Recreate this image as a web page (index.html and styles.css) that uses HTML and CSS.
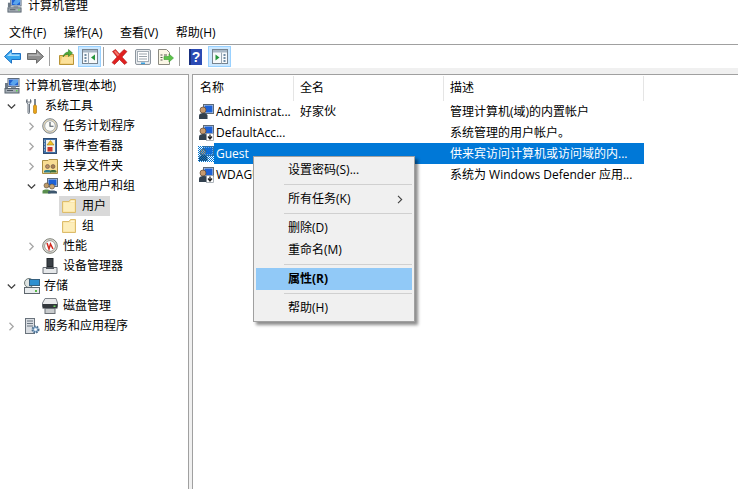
FILE: index.html
```html
<!DOCTYPE html>
<html lang="zh-CN">
<head>
<meta charset="utf-8">
<title>计算机管理</title>
<link rel="stylesheet" href="styles.css">
</head>
<body>
<svg class="defs" width="0" height="0">
  <defs>
    <symbol id="computer" viewBox="0 0 16 16">
      <rect x="4" y="0.5" width="11" height="8" fill="#dfe6ee" stroke="#5c6b7c"/>
      <rect x="5" y="1.5" width="9" height="6" fill="#1f5fd0"/>
      <path d="M6 6 9 2h5v2l-4 3.500z" fill="#5aa5ee"/>
      <rect x="7" y="8.500" width="5" height="1.500" fill="#8a96a2"/>
      <rect x="1" y="10.500" width="14" height="4.500" fill="#a5adb5" stroke="#59646f"/>
      <rect x="3" y="12" width="6" height="1" fill="#505a64"/>
      <rect x="12" y="12" width="1.500" height="1.500" fill="#5fd04f"/>
      <rect x="1" y="5" width="3" height="5" fill="#6e7a86"/>
    </symbol>
    <symbol id="folder" viewBox="0 0 16 16">
      <path d="M1.500 3.500V14.500H14.500V1.500H9.500L8 3.500z" fill="#f9e09a" stroke="#dcbc6c"/>
      <path d="M2.500 4.500H13.500V13.500H2.500z" fill="#fdeebb"/>
      <path d="M10 2.500h3.500v1.500H9z" fill="#fff6d8"/>
    </symbol>
    <symbol id="users" viewBox="0 0 16 16">
      <rect x="5.500" y="0.500" width="10" height="9" fill="#cfd9e4" stroke="#5d6b7a"/>
      <rect x="6.500" y="1.500" width="8" height="7" fill="#1e62d6"/>
      <circle cx="5" cy="6" r="3" fill="#c89a6e" stroke="#5b4630" stroke-width=".7"/>
      <path d="M1 15v-3.500C1 10 3 9 5 9S9.500 10 9.500 11.500V15z" fill="#33414f"/>
    </symbol>
    <symbol id="userdown" viewBox="0 0 16 16">
      <rect x="5.500" y="0.500" width="10" height="9" fill="#cfd9e4" stroke="#5d6b7a"/>
      <rect x="6.500" y="1.500" width="8" height="7" fill="#1e62d6"/>
      <circle cx="5" cy="6" r="3" fill="#c89a6e" stroke="#5b4630" stroke-width=".7"/>
      <path d="M1 15v-3.500C1 10 3 9 5 9S9.500 10 9.500 11.500V15z" fill="#33414f"/>
      <rect x="8.500" y="8.500" width="7" height="7" fill="#fff" stroke="#8b949d" stroke-width=".7"/>
      <path d="M12 9.500v3.500M10 11.500l2 2.500 2-2.500" fill="none" stroke="#222" stroke-width="1.300"/>
    </symbol>
    <pattern id="dither" width="2" height="2" patternUnits="userSpaceOnUse">
      <rect width="1" height="1" fill="#0078d7"/>
      <rect x="1" y="1" width="1" height="1" fill="#0078d7"/>
    </pattern>
  </defs>
</svg>

<div class="window">
  <header class="titlebar">
    <svg class="title-icon" width="15" height="15"><use href="#computer"/></svg>
    <span>计算机管理</span>
  </header>

  <nav class="menubar">
    <span class="menu">文件(F)</span>
    <span class="menu">操作(A)</span>
    <span class="menu">查看(V)</span>
    <span class="menu">帮助(H)</span>
  </nav>

  <div class="toolbar">
    <span class="tool tool-nav">
      <svg width="17" height="15" viewBox="0 0 17 15"><path d="M.5 7.500 7.500.8V4.500H16.500V10.500H7.500V14.200z" fill="#38a7ee" stroke="#1f72c4"/><path d="M3 7 7.500 3V5.500H15.500V7z" fill="#a6dcfb"/></svg>
    </span>
    <span class="tool tool-nav">
      <svg width="17" height="15" viewBox="0 0 17 15"><path d="M16.500 7.500 9.500.8V4.500H.5V10.500H9.500V14.200z" fill="#8f8f8f" stroke="#6b6b6b"/><path d="M1.500 5.500H10V3L14 7H1.500z" fill="#b4b4b4"/></svg>
    </span>
    <i class="tool-sep"></i>
    <span class="tool tool-up">
      <svg width="15" height="16" viewBox="0 0 15 16"><path d="M.5 6.500H5L6 5.500H14.500V15.500H.5z" fill="#efc76c" stroke="#b89436"/><path d="M1.500 14.500 3 8H14V14.500z" fill="#fbe19a"/><path d="M4 8C5 4.500 7 3 9.500 3V.5L13.500 4 9.500 7.500V5C7.500 5 5.500 6 4 8z" fill="#4fae3c" stroke="#2f7d28" stroke-width=".6"/></svg>
    </span>
    <span class="tool tool-on tool-on-tree">
      <svg width="16" height="15" viewBox="0 0 16 15"><rect x=".5" y=".5" width="15" height="14" fill="#f7f9fb" stroke="#77838f"/><rect x="1" y="1" width="14" height="2.500" fill="#a9b8c6"/><path d="M6.500 3.500V14.500" stroke="#9aa7b3"/><path d="M2.500 6h2M2.500 9h2M2.500 12h2" stroke="#456a8a" stroke-width="1.300"/><path d="M13 5.500v6L9 8.500z" fill="#25963c"/></svg>
    </span>
    <i class="tool-sep"></i>
    <span class="tool tool-del">
      <svg width="17" height="16" viewBox="0 0 17 16"><path d="M1.500 2.500 4.500 .5 8.500 5 13 .5 16 2.500 11 8 16 13.500 13.500 15.500 8.500 10.500 3.500 15.500 1 13.500 6 8z" fill="#e01f1f" stroke="#a82020" stroke-width=".6"/><path d="M3 2.500 4.500 1.500 8.500 6 6.500 7z" fill="#f47a6e"/></svg>
    </span>
    <span class="tool tool-prop">
      <svg width="16" height="16" viewBox="0 0 16 16"><rect x=".5" y=".5" width="15" height="15" rx="1.500" fill="#e6e9ec" stroke="#8c959e"/><rect x="2.500" y="2.500" width="11" height="10" fill="#fff" stroke="#a4adb5"/><path d="M4 5h8M4 7.500h8M4 10h8" stroke="#9aa3ab"/><rect x="6" y="13.500" width="4" height="1.500" fill="#3aa0e0"/></svg>
    </span>
    <span class="tool tool-export">
      <svg width="17" height="16" viewBox="0 0 17 16"><path d="M1.500 .5H9.500L12.500 3.500V15.500H1.500z" fill="#fbf7e6" stroke="#8b8a80"/><path d="M3.500 6h2M3.500 8.500h2M3.500 11h2M7 6h3" stroke="#56544c"/><path d="M7 7.500h5V5l4.500 4-4.500 4v-2.500H7z" fill="#5cc24a" stroke="#3a9a30" stroke-width=".6"/></svg>
    </span>
    <i class="tool-sep"></i>
    <span class="tool tool-help">
      <svg width="13" height="16" viewBox="0 0 13 16"><rect width="13" height="16" fill="#2b4ab4"/><rect x="0" width="2" height="16" fill="#19307f"/><text class="help-q" x="7" y="13">?</text></svg>
    </span>
    <span class="tool tool-on tool-on-action">
      <svg width="16" height="15" viewBox="0 0 16 15"><rect x=".5" y=".5" width="15" height="14" fill="#f7f9fb" stroke="#77838f"/><rect x="1" y="1" width="14" height="2.500" fill="#a9b8c6"/><path d="M9.500 3.500V14.500" stroke="#9aa7b3"/><path d="M11.500 6h2M11.500 9h2M11.500 12h2" stroke="#456a8a" stroke-width="1.300"/><path d="M3.500 5.500v6L7.500 8.500z" fill="#25963c"/></svg>
    </span>
  </div>

  <div class="panes">
    <aside class="tree">
      <div class="node lvl0">
        <svg class="ico" width="16" height="16"><use href="#computer"/></svg>
        <span class="label">计算机管理(本地)</span>
      </div>
      <div class="node lvl1">
        <svg class="chev open" width="9" height="9" viewBox="0 0 9 9"><path d="M.8 2.500 4.500 6.200 8.200 2.500"/></svg>
        <svg class="ico" width="14" height="16" viewBox="0 0 14 16"><path d="M2 1.500C1 3 1.500 5.500 3 6v8.500c0 1.500 1.500 1.500 1.500 0V6C6 5.500 6.500 3 5.500 1.500V4H3.500L2 4z" fill="#e4e8ec" stroke="#5b6570" stroke-width=".9"/><path d="M10 1v6" stroke="#7d8791" stroke-width="2"/><rect x="8.500" y="7" width="3" height="8.500" rx="1.200" fill="#eaa517" stroke="#a86f0c" stroke-width=".6"/></svg>
        <span class="label">系统工具</span>
      </div>
      <div class="node lvl2">
        <svg class="chev" width="9" height="9" viewBox="0 0 9 9"><path d="M2.500 .8 6.200 4.500 2.500 8.200"/></svg>
        <svg class="ico" width="16" height="16" viewBox="0 0 16 16"><circle cx="8" cy="8" r="7.300" fill="#e6d9b8" stroke="#7e8790"/><circle cx="8" cy="8" r="5.300" fill="#fbfbf7" stroke="#a8aeb4"/><path d="M8 4v4.200h3.500" fill="none" stroke="#4a5560" stroke-width="1.100"/></svg>
        <span class="label">任务计划程序</span>
      </div>
      <div class="node lvl2">
        <svg class="chev" width="9" height="9" viewBox="0 0 9 9"><path d="M2.500 .8 6.200 4.500 2.500 8.200"/></svg>
        <svg class="ico" width="16" height="16" viewBox="0 0 16 16"><rect x="1.500" y=".5" width="13" height="15" fill="#3e6fa8" stroke="#304d73"/><rect x="4" y="2" width="9" height="12" fill="#f5f2e6"/><path d="M8.500 2.500 12 7H5z" fill="#f0c020" stroke="#8c6b10" stroke-width=".5"/><rect x="5.500" y="9" width="5" height="4.500" fill="#c8322c"/><path d="M2 3h1M2 6h1M2 9h1M2 12h1" stroke="#ddd"/></svg>
        <span class="label">事件查看器</span>
      </div>
      <div class="node lvl2">
        <svg class="chev" width="9" height="9" viewBox="0 0 9 9"><path d="M2.500 .8 6.200 4.500 2.500 8.200"/></svg>
        <svg class="ico" width="16" height="16" viewBox="0 0 16 16"><path d="M.5 2.500H6L7 1.500H15.500V15.500H.5z" fill="#f8dc93" stroke="#a98e44"/><circle cx="5.500" cy="8.500" r="2" fill="#b98e62" stroke="#544" stroke-width=".5"/><path d="M2 14.500v-1.500C2 11.500 9 11.500 9 13v1.500z" fill="#2f7f8f"/><circle cx="11" cy="8.500" r="2" fill="#a87e50" stroke="#544" stroke-width=".5"/><path d="M8 14.500v-1.500C8 11.500 14.500 11.500 14.500 13v1.500z" fill="#3c6e3c"/></svg>
        <span class="label">共享文件夹</span>
      </div>
      <div class="node lvl2">
        <svg class="chev open" width="9" height="9" viewBox="0 0 9 9"><path d="M.8 2.500 4.500 6.200 8.200 2.500"/></svg>
        <svg class="ico" width="16" height="16" viewBox="0 0 16 16"><rect x="5.500" y=".5" width="10" height="8" fill="#cfd9e4" stroke="#5d6b7a"/><rect x="6.500" y="1.500" width="8" height="6" fill="#1e62d6"/><circle cx="4.500" cy="7.500" r="2.500" fill="#bd9a68" stroke="#54483a" stroke-width=".6"/><path d="M.5 15.500V13C.5 11 8.500 11 8.500 13v2.500z" fill="#5a8f4e"/><circle cx="10" cy="8.500" r="2.500" fill="#caa876" stroke="#54483a" stroke-width=".6"/><path d="M6 15.500V14C6 12 15 12 15 14v1.500z" fill="#3c566e"/></svg>
        <span class="label">本地用户和组</span>
      </div>
      <div class="node lvl3 picked">
        <svg class="ico" width="16" height="16"><use href="#folder"/></svg>
        <span class="label">用户</span>
      </div>
      <div class="node lvl3">
        <svg class="ico" width="16" height="16"><use href="#folder"/></svg>
        <span class="label">组</span>
      </div>
      <div class="node lvl2">
        <svg class="chev" width="9" height="9" viewBox="0 0 9 9"><path d="M2.500 .8 6.200 4.500 2.500 8.200"/></svg>
        <svg class="ico" width="16" height="16" viewBox="0 0 16 16"><circle cx="8" cy="8" r="7.300" fill="#e2e0d8" stroke="#7e8078"/><circle cx="8" cy="8" r="5.400" fill="#fff" stroke="#9a9a94"/><path d="M5 5 7 11 8.500 6 11 11" fill="none" stroke="#d22a20" stroke-width="1.500"/></svg>
        <span class="label">性能</span>
      </div>
      <div class="node lvl2">
        <svg class="ico" width="16" height="16" viewBox="0 0 16 16"><rect x="5" y=".5" width="6" height="8" fill="#3a4046" stroke="#23282c"/><path d="M1 9.500H15V15.500H1z" fill="#e6e8ea" stroke="#6b7178"/><rect x="4" y="9" width="8" height="2" fill="#52585e"/></svg>
        <span class="label">设备管理器</span>
      </div>
      <div class="node lvl0b">
        <svg class="chev open" width="9" height="9" viewBox="0 0 9 9"><path d="M.8 2.500 4.500 6.200 8.200 2.500"/></svg>
        <svg class="ico" width="16" height="16" viewBox="0 0 16 16"><ellipse cx="5" cy="5" rx="4.500" ry="4.500" fill="#dfe4e2" stroke="#6f7a78"/><rect x="5.500" y="1.500" width="10" height="6" fill="#2e8fd0" stroke="#35607f"/><rect x=".5" y="9.500" width="15" height="6" fill="#e9ecee" stroke="#5e666d"/><rect x="11" y="12" width="2" height="2" fill="#58b948"/></svg>
        <span class="label">存储</span>
      </div>
      <div class="node lvl2">
        <svg class="ico" width="16" height="16" viewBox="0 0 16 16"><path d="M3 .5H14L15.500 5V8.500H.5V5z" fill="#e9eaeb" stroke="#7c8288"/><rect x=".5" y="6" width="15" height="4.500" fill="#33383c"/><rect x="11.500" y="7.500" width="2" height="1.500" fill="#6fd95b"/><rect x="3" y="10.500" width="10" height="5" fill="#c9ccce" stroke="#6b7076"/></svg>
        <span class="label">磁盘管理</span>
      </div>
      <div class="node lvl0b">
        <svg class="chev" width="9" height="9" viewBox="0 0 9 9"><path d="M2.500 .8 6.200 4.500 2.500 8.200"/></svg>
        <svg class="ico" width="16" height="16" viewBox="0 0 16 16"><rect x="1.500" y=".5" width="9" height="15" fill="#d9dde2" stroke="#6a737c"/><path d="M3 3h6M3 5.500h6M3 8h6" stroke="#687480"/><circle cx="11.500" cy="11.500" r="3" fill="#8fb4d6" stroke="#4e708f" stroke-width="2" stroke-dasharray="1.500 1"/><circle cx="11.500" cy="11.500" r="1.300" fill="#fff"/></svg>
        <span class="label">服务和应用程序</span>
      </div>
    </aside>

    <div class="splitter"></div>

    <main class="list">
      <div class="list-head">
        <span class="col col-name">名称</span>
        <span class="col col-full">全名</span>
        <span class="col col-desc">描述</span>
      </div>
      <div class="row">
        <span class="cell col-name"><svg class="row-ico" width="16" height="16"><use href="#users"/></svg><span class="cell-text">Administrat...</span></span>
        <span class="cell col-full">好家伙</span>
        <span class="cell col-desc">管理计算机(域)的内置帐户</span>
      </div>
      <div class="row">
        <span class="cell col-name"><svg class="row-ico" width="16" height="16"><use href="#userdown"/></svg><span class="cell-text">DefaultAcc...</span></span>
        <span class="cell col-full"></span>
        <span class="cell col-desc">系统管理的用户帐户。</span>
      </div>
      <div class="row row-sel">
        <span class="cell col-name"><svg class="row-ico" width="16" height="16" viewBox="0 0 16 16"><use href="#users" width="16" height="16"/><rect width="16" height="16" fill="url(#dither)"/></svg><span class="cell-text">Guest</span></span>
        <span class="cell col-full"></span>
        <span class="cell col-desc">供来宾访问计算机或访问域的内...</span>
      </div>
      <div class="row">
        <span class="cell col-name"><svg class="row-ico" width="16" height="16"><use href="#userdown"/></svg><span class="cell-text">WDAGUtility...</span></span>
        <span class="cell col-full"></span>
        <span class="cell col-desc">系统为 Windows Defender 应用...</span>
      </div>
    </main>
  </div>

  <div class="context-menu">
    <div class="item">设置密码(S)...</div>
    <div class="sep"></div>
    <div class="item item-sub">所有任务(K)<svg class="sub-arrow" width="6" height="9" viewBox="0 0 6 9"><path d="M1 .8 4.700 4.500 1 8.200"/></svg></div>
    <div class="sep"></div>
    <div class="item">删除(D)</div>
    <div class="item">重命名(M)</div>
    <div class="sep"></div>
    <div class="item item-hot">属性(R)</div>
    <div class="sep"></div>
    <div class="item">帮助(H)</div>
  </div>
</div>
</body>
</html>
```
FILE: styles.css
```css
* { box-sizing: border-box; }
html, body { margin: 0; height: 100%; }
body {
  background: #fff;
  color: #000;
  font: 12px/20px "Open Sans", "Noto Sans CJK SC", sans-serif;
  overflow: hidden;
}
.defs { display: block; position: absolute; }
.window { position: relative; display: flex; flex-direction: column; height: 489px; }

.titlebar { height: 22px; display: flex; align-items: flex-start; padding-left: 7px; overflow: hidden; flex: none; }
.title-icon { margin-top: -2px; flex: none; }
.titlebar span { margin: -4px 0 0 6px; }

.menubar { height: 23px; display: flex; align-items: center; padding-left: 9px; gap: 17.500px; border-bottom: 1px solid #a0a0a0; flex: none; }

.toolbar { height: 23px; display: flex; align-items: center; flex: none; background: #fff; }
.tool { display: flex; align-items: center; justify-content: center; }
.tool-nav { width: 23px; height: 22px; }
.tool-nav:first-child { margin-left: 1px; }
.tool-up { width: 22px; height: 22px; margin-left: 5px; }
.tool-on { width: 23px; height: 21px; background: #cce8ff; border: 1px solid #99d1ff; }
.tool-on-tree, .tool-on-action { margin-left: 1px; }
.tool-sep { width: 1px; height: 19px; background: #a0a0a0; margin-left: 2px; }
.tool-del { width: 23px; height: 22px; margin-left: 4px; }
.tool-prop { width: 23px; height: 22px; }
.tool-export { width: 23px; height: 22px; }
.tool-help { width: 23px; height: 22px; margin-left: 4px; }
.help-q { font: 700 14px "Liberation Sans", sans-serif; fill: #fff; text-anchor: middle; }

.panes { flex: 1; display: flex; min-height: 0; background: #f0f0f0; padding-top: 6px; }

.tree { width: 189px; flex: none; background: #fff; border-top: 1px solid #a0a0a0; border-right: 1px solid #a0a0a0; padding-top: 1px; }
.node { display: flex; align-items: center; height: 20px; }
.lvl0 { padding-left: 4px; }
.lvl0b { padding-left: 7px; }
.lvl0b .ico { margin-left: 8px; }
.lvl0b .label { margin-left: 4px; }
.lvl1 { padding-left: 7px; }
.lvl1 .ico { margin-left: 9px; }
.lvl2 { padding-left: 27px; }
.lvl2 .ico { margin-left: 6px; }
.lvl2 > .ico:first-child { margin-left: 15px; }
.lvl3 { margin-left: 59px; width: 51px; padding-left: 2px; }
.label { margin-left: 5px; white-space: nowrap; }
.lvl1 .label { margin-left: 6px; }
.picked { background: #d9d9d9; }
.ico { flex: none; }

.chev { flex: none; fill: none; stroke: #a6a6a6; stroke-width: 1.300; }
.chev.open { stroke: #404040; }

.splitter { width: 3px; flex: none; }

.list { flex: 1; background: #fff; border-top: 1px solid #a0a0a0; border-left: 1px solid #a0a0a0; min-width: 0; padding-top: 1px; }
.list-head { display: flex; height: 25px; align-items: center; }
.col { display: block; height: 100%; line-height: 23px; padding-left: 7px; border-right: 1px solid #e5e5e5; }
.col-full.col, .col-desc.col { padding-left: 6px; }
.row { display: flex; height: 21px; align-items: center; width: 451px; }
.col-name { width: 101px; flex: none; }
.col-full { width: 150px; flex: none; }
.col-desc { width: 200px; flex: none; }
.cell { display: flex; align-items: center; height: 100%; padding-left: 6px; white-space: nowrap; overflow: hidden; }
.row .col-name { padding-left: 5px; }
.row-ico { flex: none; }
.cell-text { padding-left: 2px; }
.row-sel .col-full, .row-sel .col-desc { background: #0078d7; color: #fff; }
.row-sel .cell-text { background: #0078d7; color: #fff; flex: 1; height: 100%; line-height: 21px; }

.context-menu { position: absolute; left: 253px; top: 156px; width: 162px; background: #f0f0f0; border: 1px solid #a0a0a0; padding: 2px; box-shadow: 3px 3px 3px rgba(0,0,0,.45); }
.item { position: relative; height: 22px; line-height: 22px; padding-left: 32px; }
.item-hot { background: #91c9f7; font-weight: 700; }
.sep { height: 7px; margin-left: 28px; background: linear-gradient(#d0d0d0, #d0d0d0) center / 100% 1px no-repeat; }
.item-sub { display: flex; align-items: center; justify-content: space-between; padding-right: 9px; }
.sub-arrow { fill: none; stroke: #404040; stroke-width: 1.100; }
```
